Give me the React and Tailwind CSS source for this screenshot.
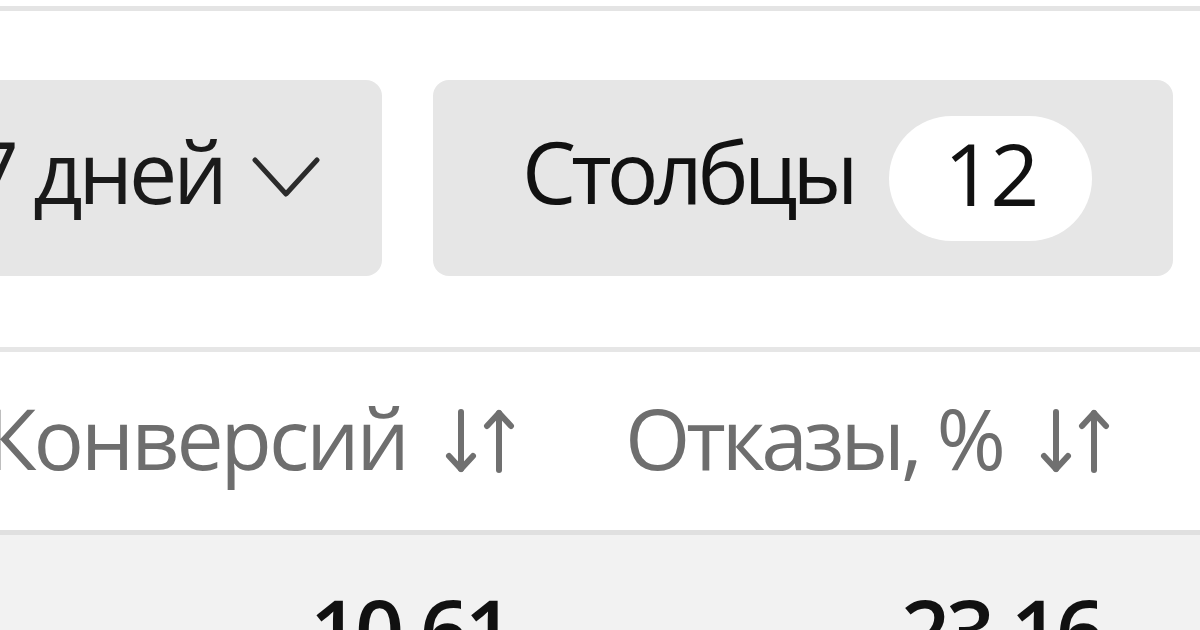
import React from "react";

function Chevron() {
  return (
    <svg width="68" height="44" viewBox="0 0 68 44" fill="none" className="shrink-0">
      <polyline points="3,4 34,38 65,4" stroke="#2b2b2b" strokeWidth="5" strokeLinecap="round" strokeLinejoin="round" />
    </svg>
  );
}

function SortArrows() {
  return (
    <svg width="70" height="66" viewBox="0 0 70 66" fill="none" className="shrink-0">
      <g stroke="#707070" strokeWidth="6" strokeLinecap="round" strokeLinejoin="round">
        <line x1="16" y1="4" x2="16" y2="61" />
        <polyline points="4,48 16,61 28,48" />
        <line x1="54" y1="5" x2="54" y2="62" />
        <polyline points="42,18 54,5 66,18" />
      </g>
    </svg>
  );
}

export default function App() {
  const font = { fontFamily: '"Open Sans", "Noto Sans", sans-serif' };
  return (
    <div className="w-[1200px] h-[630px] overflow-hidden bg-white" style={font}>
      <div className="h-[6px]" />
      <div className="h-[5px] bg-[#e4e4e4]" />
      <div className="h-[69px]" />
      {/* toolbar */}
      <div className="flex h-[196px] -ml-[118px] gap-[51px]">
        <div className="w-[500px] shrink-0 rounded-[16px] bg-[#e6e6e6] flex items-center justify-end pr-[62px] gap-[28px]">
          <span className="text-[86px] leading-none tracking-[-4px] text-[#1a1a1a] whitespace-nowrap pb-[14px]">7 дней</span>
          <Chevron />
        </div>
        <div className="w-[740px] shrink-0 rounded-[16px] bg-[#e6e6e6] flex items-center pl-[89px] gap-[35px]">
          <span className="text-[86px] leading-none tracking-[-5px] text-[#111] whitespace-nowrap pb-[14px]">Столбцы</span>
          <span className="w-[203px] h-[125px] rounded-full bg-white flex items-center justify-center text-[86px] leading-none tracking-[-3px] text-[#111] pb-[10px]">12</span>
        </div>
      </div>
      <div className="h-[71px]" />
      <div className="h-[5px] bg-[#e6e6e6]" />
      {/* header */}
      <div className="flex h-[178px] -ml-[75px] bg-white">
        <div className="w-[595px] shrink-0 flex items-center justify-end pr-[5px] gap-[38px]">
          <span className="text-[84px] leading-none tracking-[-3px] text-[#6e6e6e] whitespace-nowrap pb-[6px]">Конверсий</span>
          <SortArrows />
        </div>
        <div className="w-[595px] shrink-0 flex items-center justify-end pr-[5px] gap-[38px]">
          <span className="text-[84px] leading-none tracking-[-4px] text-[#6e6e6e] whitespace-nowrap pb-[6px]">Отказы, %</span>
          <SortArrows />
        </div>
      </div>
      <div className="h-[5px] bg-[#e0e0e0]" />
      {/* row */}
      <div className="flex h-[200px] -ml-[75px] bg-[#f2f2f2]">
        <div className="w-[595px] shrink-0 flex justify-end pr-[10px] pt-[52px]">
          <span className="text-[86px] leading-none tracking-[-4px] font-semibold text-[#111]">10,61</span>
        </div>
        <div className="w-[595px] shrink-0 flex justify-end pr-[14px] pt-[52px]">
          <span className="text-[86px] leading-none tracking-[-4px] font-semibold text-[#111]">23,16</span>
        </div>
      </div>
    </div>
  );
}
